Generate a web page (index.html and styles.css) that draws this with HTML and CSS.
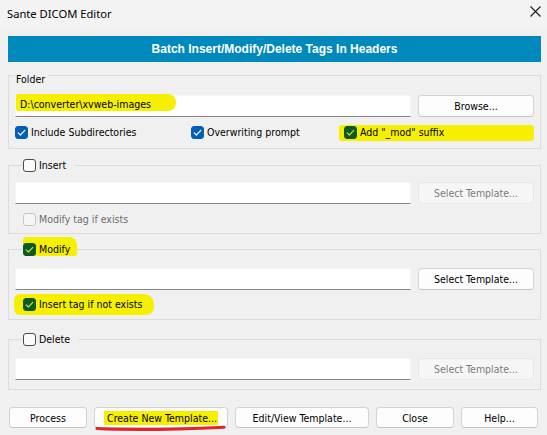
FILE: index.html
```html
<!DOCTYPE html>
<html>
<head>
<meta charset="utf-8">
<link rel="stylesheet" href="styles.css">
</head>
<body>
<div class="titlebar">
  <span class="title">Sante DICOM Editor</span>
  <svg class="close" width="11" height="11" viewBox="0 0 11 11"><path d="M0.5 0.5L10.5 10.5M10.5 0.5L0.5 10.5" stroke="#1a1a1a" stroke-width="1.1" fill="none"/></svg>
</div>
<div class="content">
  <div class="banner">Batch Insert/Modify/Delete Tags In Headers</div>

  <fieldset class="group group-folder">
    <legend class="legend legend-text">Folder</legend>
    <div class="field-row">
      <div class="edit"><span class="hl hl-path">D:\converter\xvweb-images</span></div>
      <button class="btn">Browse...</button>
    </div>
    <div class="options">
      <label class="check"><span class="box on"><svg viewBox="0 0 13 13"><path d="M3.2 6.8L5.4 9L9.8 4.4"/></svg></span>Include Subdirectories</label>
      <label class="check"><span class="box on"><svg viewBox="0 0 13 13"><path d="M3.2 6.8L5.4 9L9.8 4.4"/></svg></span>Overwriting prompt</label>
      <label class="check hl hl-mod"><span class="box on marked"><svg viewBox="0 0 13 13"><path d="M3.2 6.8L5.4 9L9.8 4.4"/></svg></span>Add "_mod" suffix</label>
    </div>
  </fieldset>

  <fieldset class="group group-insert">
    <legend class="legend legend-check legend-insert"><label class="check"><span class="box"></span>Insert</label></legend>
    <div class="field-row">
      <div class="edit"></div>
      <button class="btn" disabled>Select Template...</button>
    </div>
    <div class="options options-sub">
      <label class="check disabled"><span class="box"></span>Modify tag if exists</label>
    </div>
  </fieldset>

  <fieldset class="group group-modify">
    <legend class="legend legend-check legend-modify"><label class="check hl hl-legend"><span class="box on marked"><svg viewBox="0 0 13 13"><path d="M3.2 6.8L5.4 9L9.8 4.4"/></svg></span>Modify</label></legend>
    <div class="field-row">
      <div class="edit"></div>
      <button class="btn">Select Template...</button>
    </div>
    <div class="options options-sub">
      <label class="check hl hl-insert"><span class="box on marked"><svg viewBox="0 0 13 13"><path d="M3.2 6.8L5.4 9L9.8 4.4"/></svg></span>Insert tag if not exists</label>
    </div>
  </fieldset>

  <fieldset class="group group-delete">
    <legend class="legend legend-check legend-delete"><label class="check"><span class="box"></span>Delete</label></legend>
    <div class="field-row">
      <div class="edit"></div>
      <button class="btn" disabled>Select Template...</button>
    </div>
  </fieldset>

  <div class="actions">
    <button class="btn btn-process">Process</button>
    <button class="btn btn-create"><span class="hl hl-create">Create New Template...</span><svg class="underline" width="132" height="8" viewBox="0 0 132 8"><path d="M2 4.6 Q 50 7 129 3.2" stroke="#e5232a" stroke-width="3" fill="none" stroke-linecap="round"/></svg></button>
    <button class="btn btn-edit">Edit/View Template...</button>
    <button class="btn btn-close">Close</button>
    <button class="btn btn-help">Help...</button>
  </div>
</div>
</body>
</html>
```
FILE: styles.css
```css
* { box-sizing: border-box; }
html, body { margin: 0; padding: 0; }
body {
  width: 547px;
  height: 435px;
  overflow: hidden;
  background: #f0f0f0;
  color: #000;
  font-family: "DejaVu Sans Condensed", "DejaVu Sans", sans-serif;
  font-stretch: condensed;
  font-size: 10.5px;
}

.titlebar {
  height: 27px;
  background: #f3f3f3;
  display: flex;
  align-items: center;
  justify-content: space-between;
  padding: 0 6px 1px 7px;
}
.title {
  font-family: "Noto Sans", sans-serif;
  font-stretch: normal;
  font-size: 11.2px;
}
.close { align-self: flex-start; margin-top: 6px; }

.content { padding: 9px 6px 0 8px; }

.banner {
  height: 26px;
  background: #0089bc;
  color: #fff;
  font-family: "Liberation Sans", Arial, sans-serif;
  font-stretch: normal;
  font-weight: bold;
  font-size: 12px;
  display: flex;
  align-items: center;
  justify-content: center;
}

.group {
  margin: 0;
  min-width: 0;
  border: 1px solid #dcdcdc;
  padding: 0 6px 9px;
}
.legend { padding: 0; line-height: 14px; }
.legend-text { padding: 8px 3px 0 1px; margin-left: 0; }
.legend-check { display: flex; height: 14px; margin-left: 7px; padding: 0 9px 0 1px; }
.legend-modify { padding-right: 0; }

.group-folder { margin-top: 2px; padding-top: 9px; }
.group-insert { margin-top: 9px; padding-top: 10px; padding-bottom: 7px; }
.group-modify { margin-top: 8px; padding-top: 12px; padding-bottom: 8px; }
.group-delete { margin-top: 12px; padding-top: 12px; padding-bottom: 9px; }

.field-row { display: flex; gap: 7px; align-items: flex-end; }
.edit {
  flex: 1;
  height: 22px;
  background: #fff;
  border: 1px solid #f4f4f4;
  border-bottom: 1px solid #858585;
  display: flex;
  align-items: flex-start;
}

.btn {
  width: 116px;
  height: 22px;
  margin: 0;
  padding: 0;
  font: inherit;
  color: #000;
  background: #fdfdfd;
  border: 1px solid #d3d3d3;
  border-bottom-color: #c4c4c4;
  border-radius: 4px;
  position: relative;
}
.btn:disabled {
  background: #f6f6f6;
  border-color: #e6e6e6;
  color: #7c7c7c;
}

.options {
  display: grid;
  grid-template-columns: 176px 153px auto;
  height: 14px;
  margin-top: 8px;
  align-items: center;
}
.options-sub { display: flex; padding-left: 8px; }
.group-modify .options-sub { margin-top: 7px; }

.check {
  display: inline-flex;
  align-items: center;
  gap: 3px;
  line-height: 14px;
  white-space: nowrap;
}
.check.disabled { color: #6d6d6d; }

.box {
  width: 13px;
  height: 13px;
  flex: none;
  border: 1px solid #4a4a4a;
  border-radius: 3px;
  background: #fbfbfb;
  display: flex;
}
.check.disabled .box { border-color: #c6c6c6; background: #f6f6f6; }
.box svg { width: 13px; height: 13px; margin: -1px; }
.box svg path { fill: none; stroke: #fff; stroke-width: 1.2; stroke-linecap: round; stroke-linejoin: round; }
.box.on { background: #005fb8; border-color: #005fb8; }
.box.marked { background: #0c5a20; border-color: #0c5a20; }
.box.marked svg path { stroke: #c9d94e; }

.hl { background: #f7ef00; }
.hl-path {
  height: 17px;
  margin-top: -2px;
  padding: 3px 25px 0 4px;
  line-height: 14px;
  border-radius: 2px 8px 8px 2px;
}
.hl-mod {
  margin-left: -5px;
  padding: 0 7px 2px 5px;
  margin-bottom: -2px;
  border-radius: 3px;
}
.hl-legend {
  margin-top: -5px;
  padding: 5px 7px 0 0;
  border-radius: 3px 8px 3px 3px;
}
.hl-insert {
  margin: -3px 0 -4px -9px;
  padding: 3px 12px 4px 9px;
  border-radius: 6px 10px 8px 6px;
}

.actions {
  display: flex;
  gap: 7px;
  margin-top: 17px;
  padding-left: 1px;
}
.actions .btn { height: 21px; }
.btn-process { width: 78px; }
.btn-create { width: 134px; }
.btn-edit { width: 134px; }
.btn-close { width: 78px; }
.btn-help { width: 77px; }
.hl-create { padding: 1px 1px 1px 3px; }
.underline { position: absolute; left: 0; bottom: -5px; }
```
